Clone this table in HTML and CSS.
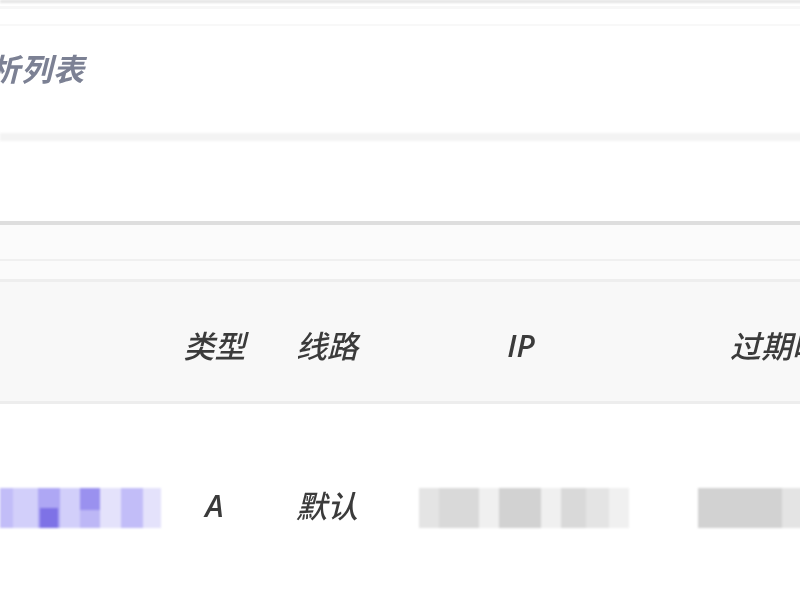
FILE: index.html
```html
<!DOCTYPE html>
<html lang="zh-CN">
<head>
<meta charset="utf-8">
<title>解析列表</title>
<link rel="stylesheet" href="styles.css">
</head>
<body>
<div class="page">
  <div class="top-edge"></div>
  <div class="top-gap"></div>
  <section class="title-card">
    <h1 class="title">解析列表</h1>
  </section>
  <div class="band"></div>
  <section class="toolbar"></section>
  <div class="table-top">
    <div class="table-top-line"></div>
  </div>
  <div class="table">
    <div class="row head">
      <div class="cell c1"></div>
      <div class="cell c2">类型</div>
      <div class="cell c3">线路</div>
      <div class="cell c4">IP</div>
      <div class="cell c5">过期时间</div>
    </div>
    <div class="row body">
      <div class="cell c1">
        <div class="mosaic violet">
          <span class="m w13 v2"></span><span class="m w25 v1"></span><span class="m w22 v3 split"><i class="hi"></i></span><span class="m w20 v1"></span><span class="m w20 v4"></span><span class="m w21 v0"></span><span class="m w22 v2"></span><span class="m w18 v0"></span>
        </div>
      </div>
      <div class="cell c2">A</div>
      <div class="cell c3">默认</div>
      <div class="cell c4">
        <div class="mosaic gray">
          <span class="m w20 g1"></span><span class="m w40 g2"></span><span class="m w20 g0"></span><span class="m w42 g3"></span><span class="m w20 g0"></span><span class="m w25 g2"></span><span class="m w23 g1"></span><span class="m w20 g0"></span>
        </div>
      </div>
      <div class="cell c5">
        <div class="mosaic gray wide">
          <span class="m w84 g3"></span><span class="m w20 g1"></span><span class="m w40 g2"></span><span class="m w40 g1"></span><span class="m w14 g0"></span>
        </div>
      </div>
    </div>
  </div>
</div>
</body>
</html>
```

FILE: styles.css
```css
html, body {
  margin: 0;
  padding: 0;
  background: #ffffff;
  overflow: hidden;
}

body {
  width: 800px;
  height: 600px;
  font-family: "Noto Sans CJK SC", "Noto Sans", sans-serif;
}

.page {
  width: 933px;
  display: flex;
  flex-direction: column;
}

.top-edge {
  height: 3px;
  background: #e3e3e3;
  filter: blur(0.8px);
}

.top-gap {
  height: 20px;
  border-top: 3px solid #f7f7f7;
  border-bottom: 2px solid #f8f8f8;
  box-sizing: border-box;
  margin-top: 3px;
}

.title-card {
  height: 107px;
  display: flex;
  align-items: center;
  padding-bottom: 24px;
  box-sizing: border-box;
}

.title {
  margin: 0 0 0 -43px;
  font-size: 31px;
  font-weight: 600;
  font-style: italic;
  letter-spacing: 1px;
  color: #7c8194;
  filter: blur(0.6px);
}

.band {
  height: 8px;
  background: #f3f3f3;
  filter: blur(0.8px);
}

.toolbar {
  height: 80px;
  background: #ffffff;
  border-bottom: 4px solid #dedede;
}

.table-top {
  height: 54px;
  background: #fbfbfb;
  display: flex;
  flex-direction: column;
  justify-content: flex-end;
}

.table-top-line {
  height: 2px;
  background: #f0f0f0;
  margin-bottom: 18px;
}

.table {
  display: flex;
  flex-direction: column;
}

.row {
  display: grid;
  grid-template-columns: 166px 97px 128px 260px 282px;
}

.row.head {
  height: 125px;
  background: #f8f8f8;
  border-top: 3px solid #eeeeee;
  border-bottom: 3px solid #ededed;
  box-sizing: border-box;
}

.row.body {
  height: 195px;
  background: #ffffff;
}

.cell {
  display: flex;
  align-items: center;
  justify-content: center;
  font-size: 31px;
  font-weight: 500;
  font-style: italic;
  color: #3b3b3b;
  filter: blur(0.5px);
  white-space: nowrap;
}

.head .cell {
  padding-top: 6px;
}

.body .cell {
  padding-top: 6px;
}

.body .c1 {
  justify-content: flex-start;
}

.c4 {
  font-family: "Open Sans", sans-serif;
  font-weight: 600;
}

.body .c2 {
  font-family: "Open Sans", sans-serif;
  font-weight: 600;
}

.mosaic {
  display: flex;
  height: 40px;
  margin-top: 6px;
  filter: blur(1.2px);
}

.mosaic.gray {
  margin-left: 6px;
}

.mosaic.wide {
  margin-left: 10px;
}

.m {
  display: block;
  height: 100%;
  position: relative;
}

.w13 { width: 13px; }
.w14 { width: 14px; }
.w18 { width: 18px; }
.w20 { width: 20px; }
.w21 { width: 21px; }
.w22 { width: 22px; }
.w23 { width: 23px; }
.w25 { width: 25px; }
.w40 { width: 40px; }
.w42 { width: 42px; }
.w84 { width: 84px; }

.v0 { background: #e4e2fb; }
.v1 { background: #d2cffa; }
.v2 { background: #c2bdf8; }
.v3 { background: #aea7f4; }
.v4 { background: linear-gradient(#9a91ef 0 55%, #bdb7f6 55% 100%); }

.split .hi {
  position: absolute;
  left: 2px;
  right: 2px;
  bottom: 0;
  height: 20px;
  background: #7e72e6;
}

.g0 { background: #f0f0f0; }
.g1 { background: #e4e4e4; }
.g2 { background: #d9d9d9; }
.g3 { background: #d2d2d2; }
```
